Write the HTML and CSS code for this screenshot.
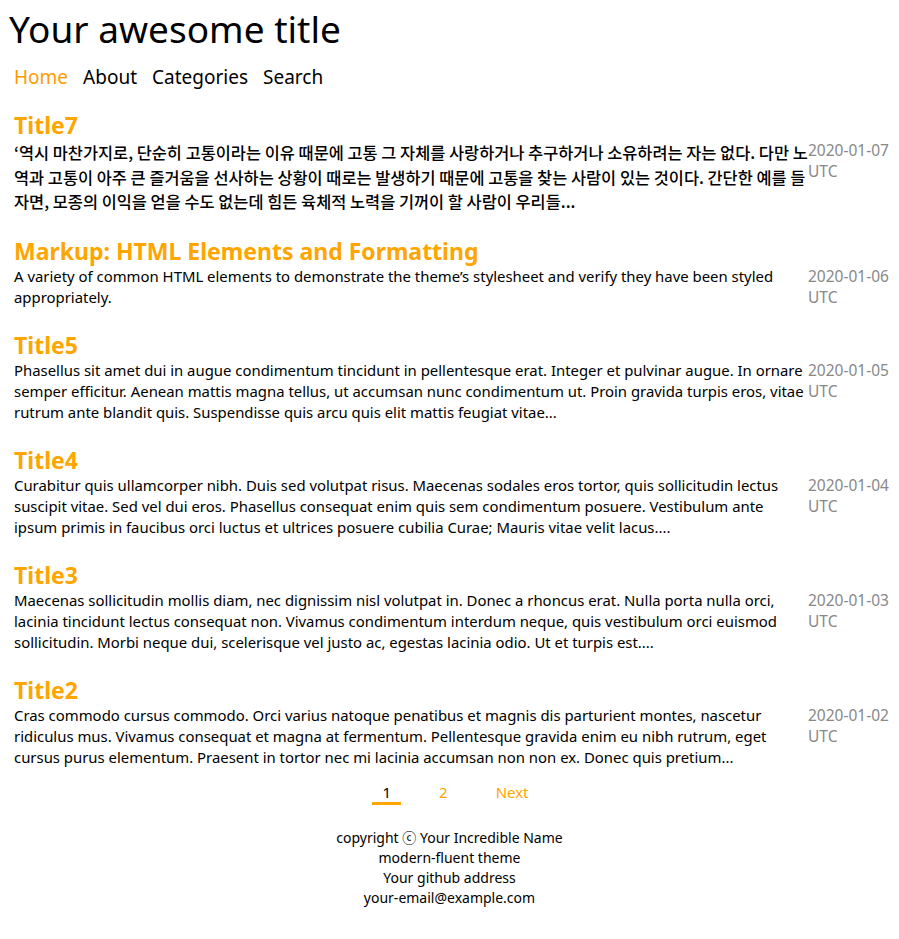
FILE: index.html
```html
<!DOCTYPE html>
<html lang="en">
<head>
<meta charset="utf-8">
<title>Your awesome title</title>
<link rel="stylesheet" href="styles.css">
</head>
<body>
<header class="site-header">
  <h1 class="site-title">Your awesome title</h1>
  <nav class="site-nav">
    <a class="nav-link active" href="#">Home</a>
    <a class="nav-link" href="#">About</a>
    <a class="nav-link" href="#">Categories</a>
    <a class="nav-link" href="#">Search</a>
  </nav>
</header>
<main class="posts">
  <article class="post">
    <h2 class="post-title"><a href="#">Title7</a></h2>
    <div class="post-row">
      <p class="post-summary lang-ko">‘역시 마찬가지로, 단순히 고통이라는 이유 때문에 고통 그 자체를 사랑하거나 추구하거나 소유하려는 자는 없다. 다만 노역과 고통이 아주 큰 즐거움을 선사하는 상황이 때로는 발생하기 때문에 고통을 찾는 사람이 있는 것이다. 간단한 예를 들자면, 모종의 이익을 얻을 수도 없는데 힘든 육체적 노력을 기꺼이 할 사람이 우리들...</p>
      <time class="post-date">2020-01-07 UTC</time>
    </div>
  </article>
  <article class="post">
    <h2 class="post-title"><a href="#">Markup: HTML Elements and Formatting</a></h2>
    <div class="post-row">
      <p class="post-summary">A variety of common HTML elements to demonstrate the theme’s stylesheet and verify they have been styled appropriately.</p>
      <time class="post-date">2020-01-06 UTC</time>
    </div>
  </article>
  <article class="post">
    <h2 class="post-title"><a href="#">Title5</a></h2>
    <div class="post-row">
      <p class="post-summary">Phasellus sit amet dui in augue condimentum tincidunt in pellentesque erat. Integer et pulvinar augue. In ornare semper efficitur. Aenean mattis magna tellus, ut accumsan nunc condimentum ut. Proin gravida turpis eros, vitae rutrum ante blandit quis. Suspendisse quis arcu quis elit mattis feugiat vitae...</p>
      <time class="post-date">2020-01-05 UTC</time>
    </div>
  </article>
  <article class="post">
    <h2 class="post-title"><a href="#">Title4</a></h2>
    <div class="post-row">
      <p class="post-summary">Curabitur quis ullamcorper nibh. Duis sed volutpat risus. Maecenas sodales eros tortor, quis sollicitudin lectus suscipit vitae. Sed vel dui eros. Phasellus consequat enim quis sem condimentum posuere. Vestibulum ante ipsum primis in faucibus orci luctus et ultrices posuere cubilia Curae; Mauris vitae velit lacus....</p>
      <time class="post-date">2020-01-04 UTC</time>
    </div>
  </article>
  <article class="post">
    <h2 class="post-title"><a href="#">Title3</a></h2>
    <div class="post-row">
      <p class="post-summary">Maecenas sollicitudin mollis diam, nec dignissim nisl volutpat in. Donec a rhoncus erat. Nulla porta nulla orci, lacinia tincidunt lectus consequat non. Vivamus condimentum interdum neque, quis vestibulum orci euismod sollicitudin. Morbi neque dui, scelerisque vel justo ac, egestas lacinia odio. Ut et turpis est....</p>
      <time class="post-date">2020-01-03 UTC</time>
    </div>
  </article>
  <article class="post">
    <h2 class="post-title"><a href="#">Title2</a></h2>
    <div class="post-row">
      <p class="post-summary">Cras commodo cursus commodo. Orci varius natoque penatibus et magnis dis parturient montes, nascetur ridiculus mus. Vivamus consequat et magna at fermentum. Pellentesque gravida enim eu nibh rutrum, eget cursus purus elementum. Praesent in tortor nec mi lacinia accumsan non non ex. Donec quis pretium...</p>
      <time class="post-date">2020-01-02 UTC</time>
    </div>
  </article>
</main>
<nav class="pagination">
  <span class="page-item current">1</span>
  <a class="page-item" href="#">2</a>
  <a class="page-item" href="#">Next</a>
</nav>
<footer class="site-footer">
  <p>copyright ⓒ Your Incredible Name</p>
  <p>modern-fluent theme</p>
  <p>Your github address</p>
  <p>your-email@example.com</p>
</footer>
</body>
</html>
```
FILE: styles.css
```css
html, body {
  margin: 0;
  padding: 0;
  background: #ffffff;
}

body {
  font-family: "Noto Sans", "Noto Sans CJK KR", sans-serif;
  color: #000000;
  font-size: 15px;
  line-height: 21px;
}

a {
  text-decoration: none;
  color: inherit;
}

.site-header {
  padding: 7px 0 0 9px;
}

.site-title {
  margin: 0;
  font-size: 37px;
  font-weight: 400;
  line-height: 44px;
}

.site-nav {
  display: flex;
  gap: 15px;
  padding: 14px 0 0 5px;
  font-size: 19px;
  line-height: 24px;
}

.nav-link {
  color: #000000;
}

.nav-link.active {
  color: #ff9a00;
}

.posts {
  display: flex;
  flex-direction: column;
  gap: 23px;
  padding: 22px 8px 0 14px;
}

.post-title {
  margin: 0;
  font-size: 23px;
  font-weight: 700;
  line-height: 29px;
  color: #ffa500;
}

.post-row {
  display: flex;
  align-items: flex-start;
}

.post-summary {
  flex: 1;
  margin: 0;
  font-size: 14.9px;
}

.post-summary.lang-ko {
  font-family: "Noto Sans CJK KR", "Noto Sans", sans-serif;
  font-size: 16.4px;
  line-height: 24.67px;
  font-weight: 500;
}

.post-date {
  flex: none;
  width: 83px;
  color: #888888;
  font-size: 15.5px;
}

.pagination {
  display: flex;
  justify-content: center;
  gap: 28px;
  margin-top: 14px;
  padding-left: 12px;
  font-size: 15px;
  line-height: 20px;
}

.page-item {
  padding: 0 10px;
  color: #ffa500;
  border-bottom: 3px solid transparent;
}

.page-item.current {
  color: #000000;
  border-bottom-color: #ffa500;
}

.site-footer {
  margin-top: 23px;
  padding-bottom: 30px;
  text-align: center;
  font-size: 14px;
  line-height: 20px;
}

.site-footer p {
  margin: 0;
}
```
